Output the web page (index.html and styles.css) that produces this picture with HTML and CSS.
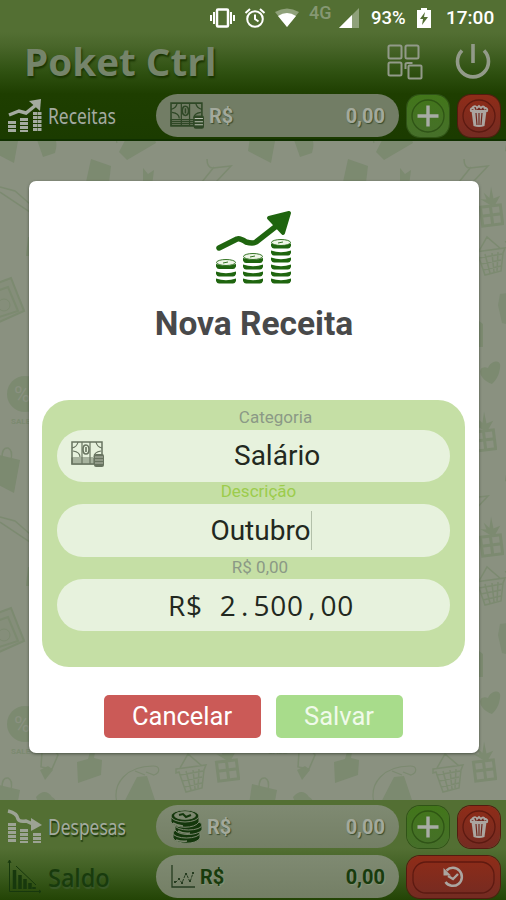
FILE: index.html
```html
<!DOCTYPE html>
<html lang="pt-BR">
<head>
<meta charset="utf-8">
<title>Poket Ctrl</title>
<link rel="stylesheet" href="styles.css">
</head>
<body>
<svg class="defs" width="0" height="0" aria-hidden="true">
  <defs>
    <symbol id="cash" viewBox="0 0 34 27">
      <path d="M1 1h30v22H1z" fill="none" stroke="currentColor" stroke-width="1.500"/>
      <path d="M1 17h22v6H1zM11 1v22M19 1v22M1 7q5-1 6-6M31 7q-5-1-6-6M2 10q7 1 7 6M30 10q-7 1-7 6M1 19h22M1 21h22" fill="none" stroke="currentColor" stroke-width="1.200"/>
      <path d="M15 4c-4 0-4 9 0 9s4-9 0-9M15 6v5" fill="none" stroke="currentColor" stroke-width="1.600"/>
      <rect x="23" y="13" width="10" height="13" rx="2" fill="currentColor"/>
      <path d="M24 16h8M24 19h8M24 22h8" stroke="#b8bdae" stroke-width="1"/>
    </symbol>
    <symbol id="plus" viewBox="0 0 42 42">
      <circle cx="21" cy="21" r="16" fill="none" stroke="#23440e" stroke-opacity=".65" stroke-width="1.300"/>
      <path d="M21 10.500v21M10.500 21h21" stroke="#a8aca5" stroke-width="3.400"/>
    </symbol>
    <symbol id="trash" viewBox="0 0 42 42">
      <circle cx="21" cy="21" r="16" fill="none" stroke="#4e120b" stroke-opacity=".7" stroke-width="1.300"/>
      <path d="M13.500 16l2 15q5.500 2 11 0l2-15z" fill="#aba5a0"/>
      <path d="M18 18l1 12M21 18v12M24 18l-1 12" stroke="#70281e" stroke-width="1.200"/>
      <path d="M13 16q-1-2 1-3l2 1-1-2q3-2 4 1l2-2 2 2q2-3 4 0l-1 1 2-1q2 1 1 3z" fill="#70281e" stroke="#aba5a0" stroke-width="1.800"/>
    </symbol>
    <symbol id="gift" viewBox="0 0 26 42">
      <g transform="rotate(-7 13 25)"><path d="M3 20h20v19H3zM13 20v19M3 29h20" fill="none" stroke="#7c8a70" stroke-width="3"/><path d="M13 19L4 12l6 1-2-7 5 6 3-11 1 12 7-2-6 8z" fill="#7c8a70"/></g>
    </symbol>
    <symbol id="basket" viewBox="0 0 34 42">
      <path d="M6 16L14 2l14 12M2 17l30-4-2 5-2 18-16 4-7-20-3 1zM6 23l23-4M8 29l20-4M10 35l18-4M12 19l5 19M19 18l2 19M25 17l-1 19" fill="none" stroke="#7c8a70" stroke-width="1.500"/>
    </symbol>
    <g id="tile" fill="#7c8a70" stroke="none">
      <path d="M-5 313l25 6-6 33-23-12z"/><path d="M2 317q0-11 6-10 5 2 3 12" fill="none" stroke="#7c8a70" stroke-width="1.500"/>
      <path d="M36 326q9-10 16 0 7 3 3 16l-12 4z"/>
      <path d="M119 341l18-35 10-1 9 27-29 17z"/><path d="M117 332c-5-20 10-37 36-37 8 0 7 7 1 9l-8-3M135 300l10 4" fill="none" stroke="#7c8a70" stroke-width="1.200"/>
      <path d="M91 18l20 7-3 25H84z"/><path d="M143 27l5 6 6-4-2 16h-9z"/>
      <path d="M207 18q0 9 6 9l18-2-15 16h-14l12-15" fill="none" stroke="#7c8a70" stroke-width="1.500"/>
      <use href="#gift" x="221" y="45" width="26" height="42"/>
      <use href="#basket" x="216" y="94" width="34" height="42"/>
      <path d="M0 46l15 4 15 13v8L0 51M248 101l7-3" fill="none" stroke="#7c8a70" stroke-width="1.500"/>
      <path d="M26 115l2-19h5v19z"/>
      <path d="M-5 143l16-6 14 32-25 12z" opacity=".35"/><path d="M-5 143l16-6 13 33-27 12M-3 150l11-4 10 24-19 6" fill="none" stroke="#7c8a70" stroke-width="2"/><circle cx="4" cy="164" r="6" fill="none" stroke="#7c8a70"/>
      <path d="M243 153l14-2v34l-12-3-4-18z" opacity=".8"/><path d="M222 180l4 3v23h-5z"/>
      <path d="M235 243c-16-6-14-20-4-16 3-8 14-9 12 0-1 8-4 12-8 16z"/>
      <circle cx="25" cy="253" r="18"/><text x="11" y="283" font-size="8" font-weight="bold">SALE</text><text x="14" y="261" font-size="22" fill="#8a9180">%</text>
      <use href="#gift" x="214" y="270" width="26" height="42"/>
      <use href="#basket" x="174" y="281" width="34" height="42"/>
      <path d="M77 291l11-3 4-14 4 1-2 12 8 2-1 15-23 8z"/>
      <path d="M40 299l8-4 5 4-8 10z"/><path d="M41 296l1-15 12-3 4 6-6 14z" fill="none" stroke="#7c8a70" stroke-width="1.500"/>
    </g>
  </defs>
</svg>

<div class="app">
  <header class="top">
    <div class="status">
      <svg width="27" height="20" viewBox="0 0 27 20"><rect x="8" y="1.500" width="11" height="17" rx="1" fill="none" stroke="#fff" stroke-width="2.500"/><path d="M5 4v12M22 4v12M2 7v6M25 7v6" stroke="#fff" stroke-width="2"/></svg>
      <svg class="alarm" width="22" height="22" viewBox="0 0 22 22"><circle cx="11" cy="12" r="7.800" fill="none" stroke="#fff" stroke-width="2"/><path d="M11 7.500V12l3.500 2.500M1.500 6L6 2M16 2l4.500 4" fill="none" stroke="#fff" stroke-width="2"/></svg>
      <svg class="wifi" width="26" height="20" viewBox="0 0 26 20"><path d="M1 4Q13-3 25 4L13 19z" fill="#fff" opacity=".35"/><path d="M4 8q9-6 18 0l-9 11z" fill="#fff"/></svg>
      <span class="net">4G</span>
      <svg class="signal" width="21" height="21" viewBox="0 0 21 21"><path d="M20 0v20H0z" fill="#fff" opacity=".35"/><path d="M13 7v13H0z" fill="#fff"/></svg>
      <span class="pct">93%</span>
      <svg class="battery" width="14" height="20" viewBox="0 0 14 20"><path d="M0 2h4V0h6v2h4v18H0z" fill="#fff"/><path d="M8 4L3 11h3l-1 6 6-8H7z" fill="#536f33"/></svg>
      <span class="clock">17:00</span>
    </div>
    <div class="brand">
      <h1><span>Poket Ctrl</span></h1>
      <svg class="apps" width="36" height="36" viewBox="0 0 36 36" fill="none" stroke="#929a89" stroke-width="2"><rect x="1.500" y="1.500" width="13" height="13" rx="1.500"/><rect x="18.500" y="1.500" width="13" height="13" rx="1.500"/><rect x="1.500" y="18.500" width="13" height="13" rx="1.500"/><rect x="21.500" y="21.500" width="13" height="13" rx="1"/><path d="M18.500 25v-5q0-1 2-1h5"/></svg>
      <svg class="power" width="36" height="37" viewBox="0 0 36 37" fill="none" stroke="#929a89" stroke-width="3.600"><path d="M7 7.500A15.500 15.500 0 1 0 29 7.500M18 1v19"/></svg>
    </div>
    <div class="row">
      <svg class="lead" width="36" height="35" viewBox="0 0 36 35"><path d="M2 17l10-4 7 2 10-8" fill="none" stroke="#a4aba0" stroke-width="3.500"/><path d="M22 3l12-2-1 12z" fill="#a4aba0"/><path d="M3 23v11M7 23v11M15 20v14M19 20v14M28 14v20M32.500 14v20" stroke="#a4aba0" stroke-width="4" stroke-dasharray="3 1"/></svg>
      <span class="name light"><span>Receitas</span></span>
      <div class="pill"><svg class="cash" width="35" height="28"><use href="#cash"/></svg><b class="light">R$</b><b class="value light">0,00</b></div>
      <div class="btn green"><svg width="42" height="42"><use href="#plus"/></svg></div>
      <div class="btn red"><svg width="42" height="42"><use href="#trash"/></svg></div>
    </div>
  </header>

  <main class="wall">
    <svg width="506" height="659" viewBox="0 0 506 659">
      <use href="#tile" y="-330"/><use href="#tile" x="257" y="-330"/><use href="#tile" x="514" y="-330"/>
      <use href="#tile"/><use href="#tile" x="257"/><use href="#tile" x="-257"/><use href="#tile" x="514"/>
      <use href="#tile" y="330"/><use href="#tile" x="257" y="330"/><use href="#tile" x="-257" y="330"/><use href="#tile" x="514" y="330"/>
    </svg>
  </main>

  <footer class="bottom">
    <div class="row">
      <svg class="lead" width="36" height="35" viewBox="0 0 36 35"><path d="M1 2q9 2 10 8 1 3 8 2l9 4" fill="none" stroke="#9ca394" stroke-width="3.500"/><path d="M24 9l11 7-11 6z" fill="#9ca394"/><path d="M3 14v20M7 14v20M15 20v14M19 20v14M28 24v10M32 24v10" stroke="#9ca394" stroke-width="4" stroke-dasharray="3 1"/></svg>
      <span class="name light desp"><span>Despesas</span></span>
      <div class="pill"><svg class="coins" width="33" height="35" viewBox="0 0 33 35"><g fill="#14370c" stroke="#7d8870" stroke-width="1"><path d="M3 24v5c3 7 24 7 27 0v-5z"/><ellipse cx="16.500" cy="24" rx="13.500" ry="5"/><path d="M5 16v5c4 6 22 6 27 0v-5z"/><ellipse cx="18.500" cy="16" rx="13.500" ry="5"/><path d="M1 7v6c4 7 24 7 28 0V7z"/><ellipse cx="15" cy="7" rx="14" ry="6"/><ellipse cx="15" cy="6.500" rx="10.500" ry="3.800" fill="#7d8870"/></g><path d="M9 6l4-1 3 3 5-2" fill="none" stroke="#14370c" stroke-width="2"/><path d="M3 14q5 3 10 3M8 22q6 3 12 2M6 31q6 2 11 1" fill="none" stroke="#7d8870" stroke-width="1.500"/></svg><b class="light">R$</b><b class="value light">0,00</b></div>
      <div class="btn green"><svg width="42" height="42"><use href="#plus"/></svg></div>
      <div class="btn red"><svg width="42" height="42"><use href="#trash"/></svg></div>
    </div>
    <div class="row">
      <svg class="lead" width="36" height="35" viewBox="0 0 36 35" stroke="#17380d" fill="none"><path d="M2.500 2v30.500H34M1 4l1.500-3L4 4M32 31l2 1.500-2 1.500" stroke-width="1"/><path d="M7.500 11v19M13 16v14M18 20v10M23 24v6M27 28v2" stroke-width="3.500"/><path d="M9 7l20 19" stroke-width="1"/></svg>
      <span class="name dark"><span>Saldo</span></span>
      <div class="pill"><svg class="chart" width="26" height="25" viewBox="0 0 26 25" fill="none" stroke="#263c20"><path d="M2 1v22h23" stroke-width="1.300"/><path d="M5 19l4-4 3 4 4-10 4 9 3-9" stroke-width="1" stroke-dasharray="3 1"/><path d="M4 18h2M8 15h2M11 19h2M15 10h2M19 17h2M22 9h2" stroke-width="2"/></svg><b class="dark">R$</b><b class="value dark">0,00</b></div>
      <div class="btn red wide"><svg width="93" height="42" viewBox="0 0 93 42"><rect x="6" y="6" width="81" height="31" rx="13" fill="none" stroke="#4e120b" stroke-opacity=".7" stroke-width="1.300"/><path d="M39.500 14.500A9 9 0 1 1 38.500 26" fill="none" stroke="#aba5a0" stroke-width="2.500"/><path d="M36.500 12v7.500h7.500z" fill="#aba5a0"/><path d="M41 20l5 3 5-5" fill="none" stroke="#aba5a0" stroke-width="2.400"/></svg></div>
    </div>
  </footer>
</div>

<div class="overlay">
  <section class="modal">
    <svg class="growth" width="78" height="76" viewBox="0 0 78 76">
      <path d="M4 38l18-9q3-1 9 3 7 2 10 0l23-18" fill="none" stroke="#1f650f" stroke-width="5.500" stroke-linecap="round" stroke-linejoin="round"/><path d="M54 8l20-5-6 20z" fill="#1f650f" stroke="#1f650f" stroke-width="4" stroke-linejoin="round"/>
      <g fill="#1f650f">
        <path id="disc" d="M1 68.500q10 3.500 20 0v2.500q-1 2.500-3 2.500H4q-2 0-3-2.500z"/>
        <use href="#disc" y="-7"/><use href="#disc" y="-14.500"/>
        <use href="#disc" x="27"/><use href="#disc" x="27" y="-7"/><use href="#disc" x="27" y="-14"/><use href="#disc" x="27" y="-20.500"/>
        <use href="#disc" x="55"/><use href="#disc" x="55" y="-7"/><use href="#disc" x="55" y="-14"/><use href="#disc" x="55" y="-21"/><use href="#disc" x="55" y="-28"/><use href="#disc" x="55" y="-35"/>
      </g>
      <g fill="#eef5e6" stroke="#1f650f" stroke-width=".9"><ellipse cx="11" cy="52.500" rx="9.500" ry="3"/><ellipse cx="38" cy="46.500" rx="9.500" ry="3"/><ellipse cx="66" cy="32.500" rx="9.500" ry="3"/><path d="M8 53l5-1M35 47l5-1M63 33l5-1"/></g>
    </svg>
    <h2>Nova Receita</h2>
    <div class="panel">
      <div class="label categoria">Categoria</div>
      <div class="field select"><svg class="fieldcash" width="34" height="27"><use href="#cash"/></svg><span>Salário</span></div>
      <div class="label descricao">Descrição</div>
      <div class="field"><span>Outubro</span><i class="caret"></i></div>
      <div class="label valor">R$ 0,00</div>
      <div class="field money"><span>R$ 2<span class="mark">.</span>500<span class="mark">,</span>00</span></div>
    </div>
    <div class="actions"><button class="cancel">Cancelar</button><button class="save">Salvar</button></div>
  </section>
</div>
</body>
</html>
```
FILE: styles.css
```css
* { box-sizing: border-box; }
body { margin: 0; width: 506px; height: 900px; overflow: hidden; position: relative; font-family: Roboto, "Liberation Sans", sans-serif; }
h1, h2 { margin: 0; }
svg { display: block; flex: none; }
.defs { position: absolute; }
.app { display: flex; flex-direction: column; height: 900px; }

.top { height: 141px; flex: none; background: linear-gradient(#536f33 0, #536f33 32px, #49662a 46px, #2f5111 72px, #1e3e00 94px, #1b3b00 100%); border-bottom: 2px solid #103000; }
.status { height: 36px; display: flex; align-items: center; padding-left: 209px; color: #fff; font-weight: 500; font-size: 18.500px; line-height: 36px; }
.alarm { margin-left: 8px; }
.wifi { margin-left: 8px; }
.net { margin-left: 9px; font-size: 18px; line-height: 16px; margin-bottom: 10px; color: #869873; width: 24px; }
.signal { margin-left: 6px; }
.pct { margin-left: 11px; width: 37px; }
.battery { margin-left: 9px; }
.clock { margin-left: 15px; font-size: 19px; }
.brand { height: 58px; display: flex; align-items: center; padding-left: 24px; }
.brand h1 { width: 363px; font: 700 37px/50px "Open Sans", sans-serif; color: #75846a; text-shadow: 1px 2px 2px #183300; margin-top: -7px; }
.brand h1 span { display: inline-block; transform: scaleX(1.045); transform-origin: left; white-space: nowrap; }
.apps { margin-top: -6px; }
.power { margin: -7px 0 0 32px; }

.row { height: 43px; display: flex; align-items: center; padding-left: 7px; }
.name { width: 105px; margin-left: 5px; margin-right: 3px; font: 400 21px/40px "Noto Sans", sans-serif; }
.name span { display: inline-block; transform: scaleX(.83); transform-origin: left; }
.desp span { transform: scaleX(.83); }
.light { color: #a4aba0; text-shadow: 1px 2px 1px #213d10; }
.dark { color: #183b0d; text-shadow: 1px 1px 1px #899777; }
.name.dark { font-size: 25px; font-weight: 500; text-shadow: 1px 2px 1px #3b592a; }
.name.dark span { transform: scaleX(.94); }
.pill { width: 243px; height: 43px; border-radius: 22px; background: #727d65; display: flex; align-items: center; padding: 0 14px; font-size: 20px; }
.bottom .pill { background: linear-gradient(#7f8a72, #747f65); }
.pill b { font-weight: 700; }
.pill .light { color: #a3a99c; text-shadow: 1px 1px 1px #3a4c2e; }
.pill .value { margin-left: auto; }
.cash { color: #2f4826; margin-right: 4px; }
.coins { margin-right: 4px; }
.chart { margin-right: 4px; }
.btn { width: 42px; height: 42px; margin-left: 8px; border-radius: 13px; flex: none; }
.btn + .btn { margin-left: 9px; }
.green { background: linear-gradient(#42761a, #466f2a); box-shadow: 0 0 0 1px #305417; }
.red { background: linear-gradient(#8f2c18, #742b22); box-shadow: 0 0 0 1px #541b10; }
.wide { width: 93px; }

.wall { flex: 1; min-height: 0; overflow: hidden; background: #8a9180; font-family: Roboto, sans-serif; }
.bottom { height: 100px; flex: none; padding-top: 5px; display: flex; flex-direction: column; gap: 7px; background: linear-gradient(#536f33 0, #536f33 48px, #3b5b1e 75px, #234405 100%); }

.overlay { position: absolute; inset: 0; padding: 181px 0 0 29px; }
.modal { width: 450px; height: 571.500px; background: #fff; border-radius: 7px; box-shadow: 0 1px 3px rgba(40, 50, 35, .65); display: flex; flex-direction: column; align-items: center; padding-top: 29px; }
.modal h2 { margin-top: 15px; height: 45px; font-size: 33.500px; line-height: 45px; font-weight: 700; color: #48494a; }
.panel { margin-top: 53.500px; width: 423px; height: 267px; flex: none; border-radius: 27px; background: #c5dfa5; padding: 0 15px; margin-right: 1px; }
.label { text-align: center; font-size: 17px; line-height: 22px; color: #8b9986; }
.categoria { height: 30px; padding: 6px 0 0 44px; }
.descricao { height: 22px; color: #9ccc4c; padding-left: 10px; line-height: 19px; }
.valor { height: 22px; padding-left: 13px; line-height: 20px; }
.field { height: 52.500px; border-radius: 26px; background: #e7f2dd; display: flex; align-items: center; justify-content: center; padding-left: 15px; font-size: 28px; color: #222820; }
.select { justify-content: flex-start; padding-left: 14px; }
.select > span { margin-left: 129px; }
.fieldcash { color: #687460; margin-top: -2px; }
.caret { width: 1px; height: 39px; background: #b3c0aa; }
.money { font-family: "Open Sans", "Noto Sans", sans-serif; letter-spacing: .8px; word-spacing: 9px; }
.mark { padding: 0 4.300px; }
.actions { display: flex; gap: 15px; margin: 28px 2px 0 0; }
button { height: 43.500px; border: 0; border-radius: 5px; color: #fff; font: 400 25.500px Roboto, sans-serif; padding: 0; }
.cancel { width: 157px; background: #cb5a57; }
.save { width: 127px; background: #a8dc8b; color: #f0faea; }
```
